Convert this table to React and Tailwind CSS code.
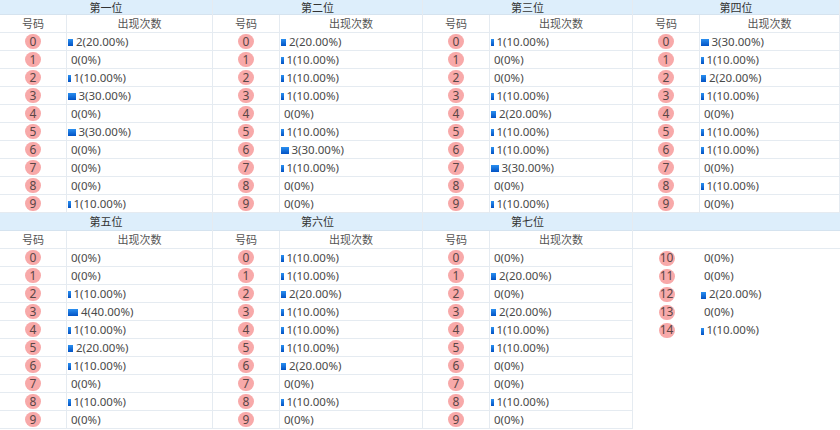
import React from "react";

const top = [
  { title: "第一位", counts: [2, 0, 1, 3, 0, 3, 0, 0, 0, 1] },
  { title: "第二位", counts: [2, 1, 1, 1, 0, 1, 3, 1, 0, 0] },
  { title: "第三位", counts: [1, 0, 0, 1, 2, 1, 1, 3, 0, 1] },
  { title: "第四位", counts: [3, 1, 2, 1, 0, 1, 1, 0, 1, 0] },
];

const bottom = [
  { title: "第五位", counts: [0, 0, 1, 4, 1, 2, 1, 0, 1, 0] },
  { title: "第六位", counts: [1, 1, 2, 1, 1, 1, 2, 0, 1, 0] },
  { title: "第七位", counts: [0, 2, 0, 2, 1, 1, 0, 0, 1, 0] },
];

const extra = [0, 0, 2, 0, 1];

const widths = ["w-[213px]", "w-[210px]", "w-[210px]", "flex-1"];

function pct(n) {
  return n === 0 ? "0(0%)" : `${n}(${n * 10}.00%)`;
}

function Count({ count }) {
  return (
    <div className="flex-1 flex items-center pl-[1px] text-[11.5px] leading-none text-[#4a4a4a]">
      {count > 0 && (
        <span
          className="h-[7px] mt-[2px] bg-gradient-to-b from-[#2a8ff0] to-[#0452c4]"
          style={{ width: `${count * 2.5}px` }}
        />
      )}
      <span className="ml-[3px]">{pct(count)}</span>
    </div>
  );
}

function Ball({ num }) {
  return (
    <span className="min-w-[16px] px-[1px] h-[15px] rounded-full bg-[#f8a9a9] flex items-center justify-center text-[12px] text-[#5a4646] leading-none">
      {num}
    </span>
  );
}

function Row({ num, count }) {
  return (
    <div className="flex h-[18px] border-b border-[#e5ebf1]">
      <div className="w-[67px] shrink-0 flex items-center justify-center border-r border-[#e5ebf1]">
        <Ball num={num} />
      </div>
      <Count count={count} />
    </div>
  );
}

function Column({ title, counts, width, first }) {
  return (
    <div className={`${width} shrink-0 border-r border-[#e5ebf1]`}>
      <div
        className={`${first ? "h-[15px]" : "h-[18px]"} bg-[#ddeefb] border-b border-[#d5e3ef] flex items-center justify-center text-[11px] leading-none text-[#333]`}
      >
        {title}
      </div>
      <div className="flex h-[18px] border-b border-[#e5ebf1] text-[11px] leading-none text-[#555]">
        <div className="w-[67px] shrink-0 flex items-center justify-center border-r border-[#e5ebf1]">
          号码
        </div>
        <div className="flex-1 flex items-center justify-center">
          出现次数
        </div>
      </div>
      {counts.map((c, i) => (
        <Row key={i} num={i} count={c} />
      ))}
    </div>
  );
}

export default function App() {
  return (
    <div
      className="w-[840px] h-[430px] overflow-hidden bg-white"
      style={{ fontFamily: '"Noto Sans", "Noto Sans CJK SC", sans-serif' }}
    >
      {/* TOP */}
      <div className="flex">
        {top.map((col, i) => (
          <Column
            key={col.title}
            title={col.title}
            counts={col.counts}
            width={widths[i]}
            first
          />
        ))}
      </div>

      {/* BOTTOM */}
      <div className="flex">
        {bottom.map((col, i) => (
          <Column
            key={col.title}
            title={col.title}
            counts={col.counts}
            width={widths[i]}
          />
        ))}
        <div className="flex-1">
          <div className="h-[18px] bg-[#ddeefb] border-b border-[#d5e3ef]" />
          <div className="h-[18px] border-b border-[#e5ebf1]" />
          {extra.map((c, i) => (
            <div key={i} className="flex h-[18px]">
              <div className="w-[67px] shrink-0 flex items-center justify-center">
                <Ball num={i + 10} />
              </div>
              <Count count={c} />
            </div>
          ))}
        </div>
      </div>
    </div>
  );
}
